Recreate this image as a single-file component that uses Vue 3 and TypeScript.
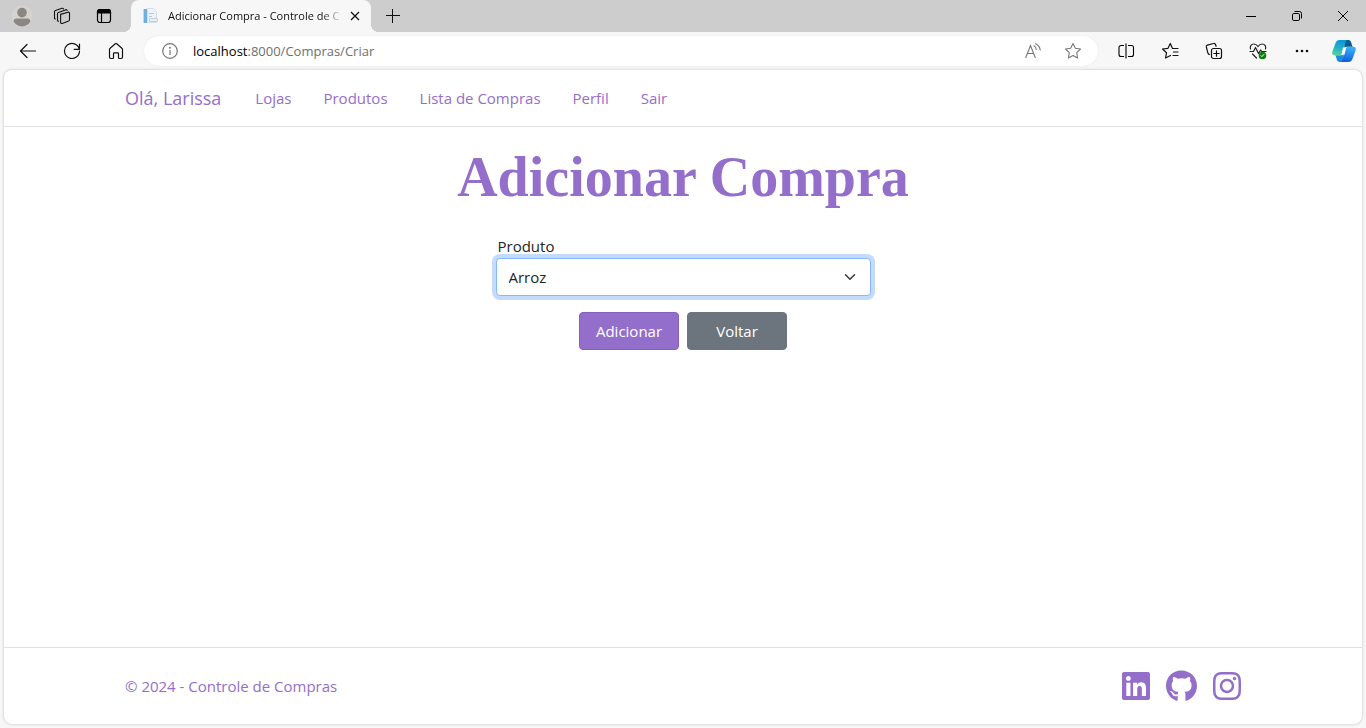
<script setup lang="ts">
import { ref } from 'vue'

interface NavLink {
  label: string
  href: string
}

interface SocialLink {
  label: string
  href: string
  viewBox: string
  width: number
  path: string
}

const navLinks: NavLink[] = [
  { label: 'Lojas', href: '#lojas' },
  { label: 'Produtos', href: '#produtos' },
  { label: 'Lista de Compras', href: '#compras' },
  { label: 'Perfil', href: '#perfil' },
  { label: 'Sair', href: '#sair' },
]

const socialLinks: SocialLink[] = [
  {
    label: 'LinkedIn',
    href: '#linkedin',
    viewBox: '0 0 448 512',
    width: 28,
    path: 'M416 32H31.9C14.3 32 0 46.5 0 64.3v383.4C0 465.5 14.3 480 31.9 480H416c17.6 0 32-14.5 32-32.3V64.3c0-17.8-14.4-32.3-32-32.3zM135.4 416H69V202.2h66.5V416zm-33.2-243c-21.3 0-38.5-17.3-38.5-38.5S80.9 96 102.2 96c21.2 0 38.5 17.3 38.5 38.5 0 21.3-17.2 38.5-38.5 38.5zm282.1 243h-66.4V312c0-24.8-.5-56.7-34.5-56.7-34.6 0-39.9 27-39.9 54.9V416h-66.4V202.2h63.7v29.2h.9c8.9-16.8 30.6-34.5 62.9-34.5 67.2 0 79.7 44.3 79.7 101.9V416z',
  },
  {
    label: 'GitHub',
    href: '#github',
    viewBox: '0 0 496 512',
    width: 31,
    path: 'M165.9 397.4c0 2-2.3 3.6-5.2 3.6-3.3.3-5.6-1.3-5.6-3.6 0-2 2.3-3.6 5.2-3.6 3-.3 5.6 1.3 5.6 3.6zm-31.1-4.5c-.7 2 1.3 4.3 4.3 4.9 2.6 1 5.6 0 6.2-2s-1.3-4.3-4.3-5.2c-2.6-.7-5.5.3-6.2 2.3zm44.2-1.7c-2.9.7-4.9 2.6-4.6 4.9.3 2 2.9 3.3 5.9 2.6 2.9-.7 4.9-2.6 4.6-4.6-.3-1.9-3-3.2-5.9-2.9zM244.8 8C106.1 8 0 113.3 0 252c0 110.9 69.8 205.8 169.5 239.2 12.8 2.3 17.3-5.6 17.3-12.1 0-6.2-.3-40.4-.3-61.4 0 0-70 15-84.7-29.8 0 0-11.4-29.1-27.8-36.6 0 0-22.9-15.7 1.6-15.4 0 0 24.9 2 38.6 25.8 21.9 38.6 58.6 27.5 72.9 20.9 2.3-16 8.8-27.1 16-33.7-55.9-6.2-112.3-14.3-112.3-110.5 0-27.5 7.6-41.3 23.6-58.9-2.6-6.5-11.1-33.3 2.6-67.9 20.9-6.5 69 27 69 27 20-5.6 41.5-8.5 62.8-8.5s42.8 2.9 62.8 8.5c0 0 48.1-33.6 69-27 13.7 34.7 5.2 61.4 2.6 67.9 16 17.7 25.8 31.5 25.8 58.9 0 96.5-58.9 104.2-114.8 110.5 9.2 7.9 17 22.9 17 46.4 0 33.7-.3 75.4-.3 83.6 0 6.5 4.6 14.4 17.3 12.1C428.2 457.8 496 362.9 496 252 496 113.3 383.5 8 244.8 8z',
  },
  {
    label: 'Instagram',
    href: '#instagram',
    viewBox: '0 0 448 512',
    width: 28,
    path: 'M224.1 141c-63.6 0-114.9 51.3-114.9 114.9s51.3 114.9 114.9 114.9S339 319.5 339 255.9 287.7 141 224.1 141zm0 189.6c-41.1 0-74.7-33.5-74.7-74.7s33.5-74.7 74.7-74.7 74.7 33.5 74.7 74.7-33.6 74.7-74.7 74.7zm146.4-194.3c0 14.9-12 26.8-26.8 26.8-14.9 0-26.8-12-26.8-26.8s12-26.8 26.8-26.8 26.8 12 26.8 26.8zm76.1 27.2c-1.7-35.9-9.9-67.7-36.2-93.9-26.2-26.2-58-34.4-93.9-36.2-37-2.1-147.9-2.1-184.9 0-35.8 1.7-67.6 9.9-93.9 36.1s-34.4 58-36.2 93.9c-2.1 37-2.1 147.9 0 184.9 1.7 35.9 9.9 67.7 36.2 93.9s58 34.4 93.9 36.2c37 2.1 147.9 2.1 184.9 0 35.9-1.7 67.7-9.9 93.9-36.2 26.2-26.2 34.4-58 36.2-93.9 2.1-37 2.1-147.8 0-184.8zM398.8 388c-7.8 19.6-22.9 34.7-42.6 42.6-29.5 11.7-99.5 9-132.1 9s-102.7 2.6-132.1-9c-19.6-7.8-34.7-22.9-42.6-42.6-11.7-29.5-9-99.5-9-132.1s-2.6-102.7 9-132.1c7.8-19.6 22.9-34.7 42.6-42.6 29.5-11.7 99.5-9 132.1-9s102.7-2.6 132.1 9c19.6 7.8 34.7 22.9 42.6 42.6 11.7 29.5 9 99.5 9 132.1s2.7 102.7-9 132.1z',
  },
]

const path = ref(':8000/Compras/Criar')
const product = ref('Arroz')
</script>

<template>
  <div class="browser">
    <div class="tab-strip">
      <button class="strip-btn" type="button" aria-label="Conta">
        <svg width="22" height="22" viewBox="0 0 22 22">
          <circle cx="11" cy="11" r="10.5" fill="#d6d2ce" />
          <circle cx="11" cy="7.6" r="4.8" fill="#8a8682" />
          <path d="M2.6 16.6c0-2 1.2-3 3-3h10.800c1.800 0 3 1 3 3-1.700 3-4.800 4.900-8.400 4.900s-6.700-1.900-8.400-4.900z" fill="#8a8682" />
        </svg>
      </button>
      <button class="strip-btn" type="button" aria-label="Espaços de trabalho">
        <svg width="18" height="18" viewBox="0 0 18 18" fill="none" stroke="#111" stroke-width="1.1" stroke-linejoin="round" stroke-linecap="round">
          <path d="M7.600 7.400 15 5.200c.8-.2 1.500.2 1.500 1v6.600c0 .6-.3 1-.9 1.200l-6.300 2.400c-.9.3-1.700-.1-1.700-1z" />
          <path d="M4.500 13.800V6.600c0-.6.300-1 .900-1.200l7.600-2.600" />
          <path d="M1.500 11.500V4.700c0-.7.300-1.100.9-1.300L9 1.300c.7-.2 1.300 0 1.500.6M4.500 13.800l1 .4M1.500 11.500l.8.500M13 2.800c.6-.1 1 .1 1.100.6" />
        </svg>
      </button>
      <button class="strip-btn wide" type="button" aria-label="Ações da guia">
        <svg width="16" height="16" viewBox="0 0 16 16" fill="none" stroke="#000" stroke-width="1.200">
          <rect x="1.500" y="1.500" width="13" height="13" rx="2.500" />
          <path d="M1.500 5V4a2.500 2.500 0 0 1 2.500-2.500h8A2.500 2.500 0 0 1 14.500 4v1z" fill="#000" />
          <path d="M5.500 5v9.500" />
        </svg>
      </button>

      <div class="tab">
        <svg class="favicon" width="16" height="16" viewBox="0 0 16 16">
          <path d="M0 1h1v14H0z" fill="#bfdcef" />
          <path d="M1 1h3v14H1z" fill="#6fb0de" />
          <path d="M4.500.5h6l3 3V14.500h-9z" fill="#eef3f8" stroke="#d3dde6" />
          <path d="M6 5.500h5M6 8.500h3" stroke="#b6c7d6" />
          <path d="M6.500 10.500h8v3h-8z" fill="#e6edf3" stroke="#c4d0dc" />
        </svg>
        <span class="tab-title">Adicionar Compra - Controle de C</span>
        <button class="tab-close" type="button" aria-label="Fechar guia">
          <svg width="10" height="10" viewBox="0 0 10 10" fill="none" stroke="#111" stroke-width="1.300">
            <path d="m1 1 8 8M9 1 1 9" />
          </svg>
        </button>
      </div>

      <button class="strip-btn wide" type="button" aria-label="Nova guia">
        <svg width="14" height="14" viewBox="0 0 14 14" stroke="#111" stroke-width="1">
          <path d="M6.500 0v14M0 6.500h14" />
        </svg>
      </button>

      <div class="window-controls">
        <button class="win-btn" type="button" aria-label="Minimizar">
          <svg width="10" height="10" viewBox="0 0 10 10" stroke="#000"><path d="M0 5.500h10" /></svg>
        </button>
        <button class="win-btn" type="button" aria-label="Restaurar">
          <svg width="10" height="10" viewBox="0 0 10 10" fill="none" stroke="#000">
            <rect x=".5" y="2.500" width="7" height="7" rx="1.300" />
            <path d="M2.500.5h5a2 2 0 0 1 2 2v5" />
          </svg>
        </button>
        <button class="win-btn" type="button" aria-label="Fechar">
          <svg width="10" height="10" viewBox="0 0 10 10" stroke="#000"><path d="m0 0 10 10M10 0 0 10" /></svg>
        </button>
      </div>
    </div>

    <div class="toolbar">
      <div class="tool-group">
        <button class="tool-btn" type="button" aria-label="Voltar uma página">
          <svg width="18" height="16" viewBox="0 0 18 16" fill="none" stroke="#111" stroke-width="1.200" stroke-linejoin="round" stroke-linecap="round">
            <path d="M8 1.500 1.500 8 8 14.500M1.500 8h15" />
          </svg>
        </button>
        <button class="tool-btn" type="button" aria-label="Atualizar">
          <svg width="18" height="18" viewBox="0 0 18 18" fill="none" stroke="#111" stroke-width="1.200" stroke-linejoin="round" stroke-linecap="round">
            <path d="M16.300 7.200A7.500 7.500 0 1 0 16.500 9M16.500 2v5.300h-5.300" />
          </svg>
        </button>
        <button class="tool-btn" type="button" aria-label="Página inicial">
          <svg width="16" height="18" viewBox="0 0 16 18" fill="none" stroke="#111" stroke-width="1.200" stroke-linejoin="round">
            <path d="M1.500 7.600c0-.6.200-1 .6-1.300l5.200-4.500c.4-.4 1-.4 1.400 0l5.200 4.500c.4.300.6.700.6 1.300v7.500c0 .8-.5 1.400-1.300 1.400h-1.900c-.5 0-.8-.3-.8-.8v-4c0-.5-.3-.8-.8-.8H6.300c-.5 0-.8.3-.8.8v4c0 .5-.3.8-.8.8H2.800c-.8 0-1.300-.6-1.300-1.400z" />
          </svg>
        </button>
      </div>

      <div class="address">
        <svg width="16" height="16" viewBox="0 0 16 16" fill="none" stroke="#767676" stroke-width="1.200">
          <circle cx="8" cy="8" r="7.300" />
          <path d="M8 7v5" />
          <circle cx="8" cy="4.800" r=".4" fill="#767676" />
        </svg>
        <div class="url">
          <label for="url">localhost</label>
          <input id="url" v-model="path" type="text" spellcheck="false" />
        </div>
        <button class="address-btn" type="button" aria-label="Ler em voz alta">
          <svg width="16" height="16" viewBox="0 0 16 16" fill="none" stroke="#777" stroke-width="1.100" stroke-linecap="round">
            <path d="M.8 14.500 5.500 2.500l4.700 12M2.500 10.500h6M9 2.800c1.400.8 2.100 2 2.200 3.700M10.500.8c2.800 1.400 4.400 3.500 4.700 6.200" />
          </svg>
        </button>
        <button class="address-btn" type="button" aria-label="Adicionar aos favoritos">
          <svg width="18" height="18" viewBox="0 0 18 18" fill="none" stroke="#777" stroke-width="1.100" stroke-linejoin="round">
            <path d="m9 1.500 2.300 4.800 5.200.7-3.800 3.700.9 5.300L9 13.500 4.400 16l.9-5.300L1.500 7l5.200-.7z" />
          </svg>
        </button>
      </div>

      <div class="tool-group">
        <button class="tool-btn" type="button" aria-label="Tela dividida">
          <svg width="17" height="16" viewBox="0 0 17 16" fill="none" stroke="#000" stroke-width="1.100">
            <path d="M6 2.500H3a2 2 0 0 0-2 2v7a2 2 0 0 0 2 2h3M10 2.500h3.500a2 2 0 0 1 2 2v7a2 2 0 0 1-2 2H10M8 .5v15" />
          </svg>
        </button>
        <button class="tool-btn" type="button" aria-label="Favoritos">
          <svg width="18" height="18" viewBox="0 0 18 18" fill="none" stroke="#111" stroke-width="1.200" stroke-linejoin="round" stroke-linecap="round">
            <path d="M17 6.500h-5.500L9.300 1.600 7 6.300l-5.500.7 4 3.800-1 5.200 5-2.500M12.500 10H17M12 13.500h5" />
          </svg>
        </button>
        <button class="tool-btn" type="button" aria-label="Coleções">
          <svg width="18" height="18" viewBox="0 0 18 18" fill="none" stroke="#111" stroke-width="1.200" stroke-linejoin="round" stroke-linecap="round">
            <rect x="6.500" y="6.500" width="10" height="10" rx="2" />
            <path d="M11.500 8.800v5.400M8.800 11.500h5.400M4.500 12.500c-.7 0-1.200-.4-1.500-1.200L1.300 5c-.2-.9.200-1.600 1-1.900l6.200-1.600c1-.3 1.700.2 2 1l.6 1.800" />
          </svg>
        </button>
        <button class="tool-btn" type="button" aria-label="Informações do navegador">
          <svg width="18" height="18" viewBox="0 0 18 18" fill="none" stroke="#222" stroke-width="1.200" stroke-linejoin="round" stroke-linecap="round">
            <path d="M1.500 7C.6 4 2.500 2 4.800 2 6.600 2 8 3 9 4.500 10 3 11.400 2 13.200 2c2.300 0 4.200 2 3.300 5M1 9.500h3.500L6.500 5.500l3 6 2.200-3.500 1 1.500H17M3.500 12l4 4" />
            <circle cx="13.500" cy="13.500" r="3.800" fill="#107c10" stroke="none" />
            <path d="m12 13.700.9.900 2-2.100" stroke="#fff" stroke-width="1" />
          </svg>
        </button>
        <button class="tool-btn" type="button" aria-label="Configurações e mais">
          <svg width="14" height="4" viewBox="0 0 14 4" fill="#111">
            <circle cx="2" cy="2" r="1.300" /><circle cx="7" cy="2" r="1.300" /><circle cx="12" cy="2" r="1.300" />
          </svg>
        </button>
        <button class="tool-btn copilot" type="button" aria-label="Copilot">
          <svg width="24" height="22" viewBox="0 0 24 22">
            <defs>
              <linearGradient id="leaf-left" x1=".5" y1="0" x2=".3" y2="1">
                <stop offset="0" stop-color="#0b97d8" />
                <stop offset=".5" stop-color="#22b0c8" />
                <stop offset="1" stop-color="#55d69b" />
              </linearGradient>
              <linearGradient id="leaf-right" x1=".6" y1="0" x2=".4" y2="1">
                <stop offset="0" stop-color="#38b5f5" />
                <stop offset="1" stop-color="#1458e5" />
              </linearGradient>
            </defs>
            <path d="M12 0h4.500c1.500 0 2.200 1 2.700 2.500l1 3.200c.3.800.8 1.100 1.600 1.100h-7c-1.300 0-2 .7-2.400 2z" fill="#0a5b91" />
            <path d="M12 22H7.500c-1.500 0-2.200-1-2.700-2.500l-1-3.200c-.3-.8-.8-1.100-1.600-1.100h7c1.300 0 2-.7 2.400-2z" fill="#1d8be0" />
            <path d="M16 0H7.500C5.300 0 4 1.400 3.200 4L.5 11.300c-.9 2.500.1 4 2.400 4h4.800c1.400 0 2.200-.8 2.600-2.200l3-10.300C13.700 1 14.400 0 16 0z" fill="url(#leaf-left)" />
            <path d="M8 22h8.500c2.200 0 3.500-1.400 4.300-4l2.700-7.300c.9-2.500-.1-4-2.400-4h-4.800c-1.400 0-2.200.8-2.600 2.200l-3 10.300C10.300 21 9.600 22 8 22z" fill="url(#leaf-right)" />
            <path d="m11 7.500h3L12.500 14.500h-3z" fill="#fff" />
          </svg>
        </button>
      </div>
    </div>

    <div class="page">
      <header class="site-header">
        <nav class="container nav">
          <a class="brand" href="#inicio">Olá, Larissa</a>
          <a v-for="link in navLinks" :key="link.label" class="nav-link" :href="link.href">{{ link.label }}</a>
        </nav>
      </header>

      <main class="content">
        <h1>Adicionar Compra</h1>
        <form class="form" @submit.prevent>
          <label class="field-label" for="produto">Produto</label>
          <div class="select-box">
            <select id="produto" v-model="product">
              <option>Arroz</option>
            </select>
            <svg class="chevron" width="12" height="12" viewBox="0 0 16 16" fill="none" stroke="#343a40" stroke-width="2" stroke-linecap="round" stroke-linejoin="round" aria-hidden="true">
              <path d="m2 5 6 6 6-6" />
            </svg>
          </div>
          <div class="actions">
            <button class="btn primary" type="submit">Adicionar</button>
            <button class="btn secondary" type="button">Voltar</button>
          </div>
        </form>
      </main>

      <footer class="site-footer">
        <div class="container footer-row">
          <span>© 2024 - Controle de Compras</span>
          <div class="social">
            <a v-for="item in socialLinks" :key="item.label" :href="item.href" :aria-label="item.label">
              <svg :width="item.width" height="32" :viewBox="item.viewBox" fill="currentColor"><path :d="item.path" /></svg>
            </a>
          </div>
        </div>
      </footer>
    </div>
  </div>
</template>

<style>
body {
  margin: 0;
}
</style>

<style scoped>
.browser {
  --purple: #946ecb;
  display: flex;
  flex-direction: column;
  min-height: 100vh;
  box-sizing: border-box;
  padding-bottom: 4px;
  background: #f7f7f7;
  color: #212529;
  font-family: "Open Sans", "Noto Sans", sans-serif;
  font-size: 15px;
  line-height: 24px;
}

.browser *,
.browser *::before,
.browser *::after {
  box-sizing: border-box;
}

button,
input,
select {
  margin: 0;
  padding: 0;
  border: 0;
  background: none;
  color: inherit;
  font: inherit;
}

svg {
  display: block;
  flex: none;
}

.tab-strip {
  display: flex;
  height: 32px;
  padding-left: 2px;
  background: #cdcdcd;
}

.strip-btn,
.win-btn,
.tool-btn,
.address-btn {
  display: flex;
  flex: none;
  align-items: center;
  justify-content: center;
  width: 40px;
}

.strip-btn.wide {
  width: 44px;
}

.tab {
  position: relative;
  display: flex;
  align-items: center;
  width: 240px;
  margin-left: 5px;
  padding: 0 8px 0 12px;
  border-radius: 8px 8px 0 0;
  background: #f7f7f7;
}

.tab::before,
.tab::after {
  content: "";
  position: absolute;
  bottom: 0;
  width: 8px;
  height: 8px;
}

.tab::before {
  right: 100%;
  background: radial-gradient(circle at 0 0, transparent 8px, #f7f7f7 8px);
}

.tab::after {
  left: 100%;
  background: radial-gradient(circle at 100% 0, transparent 8px, #f7f7f7 8px);
}

.tab-title {
  flex: 1;
  min-width: 0;
  margin: 0 4px 0 9px;
  color: #111;
  font-size: 11px;
  line-height: 16px;
  white-space: nowrap;
  mask-image: linear-gradient(to right, #000 88%, transparent);
}

.tab-close {
  display: flex;
  align-items: center;
  justify-content: center;
  width: 16px;
  height: 16px;
}

.window-controls {
  display: flex;
  margin-left: auto;
}

.win-btn {
  width: 46px;
}

.toolbar {
  display: flex;
  align-items: center;
  gap: 6px;
  height: 38px;
  padding: 0 2px 0 6px;
}

.tool-group {
  display: flex;
}

.tool-btn {
  width: 44px;
  height: 30px;
}

.tool-btn.copilot {
  width: 40px;
}

.address {
  display: flex;
  flex: 1;
  align-items: center;
  height: 30px;
  padding: 0 5px 0 18px;
  border-radius: 15px;
  background: #fff;
  box-shadow: 0 0 2px #e4e4e4;
}

.url {
  display: flex;
  flex: 1;
  margin-left: 15px;
  font-size: 13px;
  line-height: 20px;
}

.url label {
  color: #000;
}

.url input {
  flex: 1;
  min-width: 0;
  color: #6f6f6f;
}

.page {
  display: flex;
  flex: 1;
  flex-direction: column;
  margin: 0 4px;
  overflow: hidden;
  border-radius: 8px;
  background: #fff;
  box-shadow: 0 0 3px #bdbdbd;
}

.container {
  width: 100%;
  max-width: 1140px;
  margin: 0 auto;
  padding: 0 12px;
}

.site-header {
  border-bottom: 1px solid #dee2e6;
}

.nav {
  display: flex;
  align-items: center;
  gap: 32px;
  height: 56px;
}

a {
  color: var(--purple);
  text-decoration: none;
}

.brand {
  padding-right: 2px;
  font-size: 18px;
  line-height: 30px;
}

.content {
  flex: 1;
  padding: 16px 12px;
}

h1 {
  margin: 0 0 22px;
  color: var(--purple);
  font-family: "Liberation Serif", "Times New Roman", serif;
  font-size: 56px;
  font-weight: 700;
  line-height: 69px;
  text-align: center;
}

.form {
  display: flex;
  flex-direction: column;
  width: 100%;
  max-width: 375px;
  margin: 0 auto;
}

.field-label {
  margin-left: 2px;
}

.select-box {
  position: relative;
}

select {
  display: block;
  width: 100%;
  height: 38px;
  padding: 0 36px 0 12px;
  border: 1px solid #86b7fe;
  border-radius: 4px;
  outline: 0;
  background: #fff;
  box-shadow: 0 0 0 4px #c2dbfe;
  appearance: none;
}

.chevron {
  position: absolute;
  top: 13px;
  right: 15px;
  pointer-events: none;
}

.actions {
  display: flex;
  justify-content: center;
  gap: 8px;
  margin-top: 16px;
}

.btn {
  width: 100px;
  height: 38px;
  border: 1px solid #6c757d;
  border-radius: 4px;
  background: #6c757d;
  color: #fff;
}

.btn.primary {
  border-color: #8560bd;
  background: var(--purple);
}

.site-footer {
  border-top: 1px solid #dee2e6;
  color: var(--purple);
}

.footer-row {
  display: flex;
  align-items: center;
  justify-content: space-between;
  height: 76px;
}

.social {
  display: flex;
  gap: 16px;
}
</style>
